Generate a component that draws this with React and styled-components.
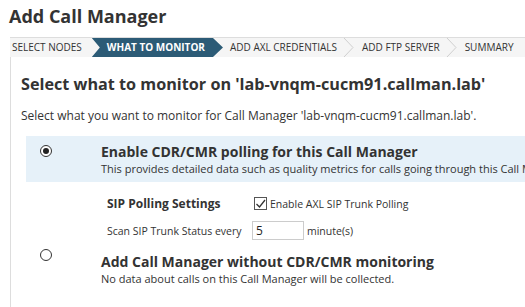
import styled, { createGlobalStyle } from 'styled-components';

const GlobalStyle = createGlobalStyle`
  body {
    margin: 0;
    font-family: "Open Sans", "Liberation Sans", sans-serif;
    color: #333;
    background: #fff;
  }
`;

const steps = [
  { label: 'SELECT NODES' },
  { label: 'WHAT TO MONITOR', active: true },
  { label: 'ADD AXL CREDENTIALS' },
  { label: 'ADD FTP SERVER' },
  { label: 'SUMMARY' },
];

const Chevron = () => (
  <svg width="12" height="19" viewBox="0 0 12 19">
    <polyline points="1,0 10,9.5 1,19" fill="none" stroke="#cfcfcf" strokeWidth="1" />
  </svg>
);

const App = () => (
  <Page>
    <GlobalStyle />
    <Title>Add Call Manager</Title>
    <Stepper>
      {steps.map((s, i) => {
        const nextActive = steps[i + 1] && steps[i + 1].active;
        return (
          <StepWrap key={s.label}>
            <Step $active={s.active} $first={i === 0}>
              {s.label}
            </Step>
            {!s.active && !nextActive && i < steps.length - 1 && <Chevron />}
          </StepWrap>
        );
      })}
    </Stepper>
    <Panel>
      <Heading>Select what to monitor on 'lab-vnqm-cucm91.callman.lab'</Heading>
      <Intro>Select what you want to monitor for Call Manager 'lab-vnqm-cucm91.callman.lab'.</Intro>

      <Option $selected>
        <Radio $checked />
        <OptionBody $offset={1}>
          <OptionTitle>Enable CDR/CMR polling for this Call Manager</OptionTitle>
          <OptionText>
            This provides detailed data such as quality metrics for calls going through this Call Manager.
          </OptionText>
        </OptionBody>
      </Option>

      <Settings>
        <SettingsRow>
          <SettingsLabel>SIP Polling Settings</SettingsLabel>
          <CheckLabel>
            <CheckBox>
              <svg width="11" height="10" viewBox="0 0 11 10">
                <polyline points="1.5,5 4.5,8 10,1" fill="none" stroke="#333" strokeWidth="1.3" />
              </svg>
            </CheckBox>
            Enable AXL SIP Trunk Polling
          </CheckLabel>
        </SettingsRow>
        <SettingsRow>
          <ScanLabel>Scan SIP Trunk Status every</ScanLabel>
          <NumberInput defaultValue="5" />
          <Unit>minute(s)</Unit>
        </SettingsRow>
      </Settings>

      <Option>
        <Radio />
        <OptionBody $offset={7}>
          <OptionTitle>Add Call Manager without CDR/CMR monitoring</OptionTitle>
          <OptionText $tall>No data about calls on this Call Manager will be collected.</OptionText>
        </OptionBody>
      </Option>
    </Panel>
  </Page>
);

const Page = styled.div`
  width: 525px;
  height: 307px;
  overflow: hidden;
`;

const Title = styled.h1`
  margin: 0;
  padding: 4px 0 0 9px;
  height: 34px;
  box-sizing: border-box;
  font-size: 18px;
  font-weight: 700;
  color: #333;
`;

const Stepper = styled.div`
  display: flex;
  align-items: center;
  margin-left: 10px;
  height: 19px;
  border-top: 1px solid #ddd;
  background: #f5f5f5;
  margin-top: 3px;
`;

const StepWrap = styled.div`
  display: flex;
  align-items: center;
  height: 100%;
`;

const Step = styled.div`
  height: 19px;
  line-height: 19px;
  font-size: 10px;
  white-space: nowrap;
  color: ${(p) => (p.$active ? '#fff' : '#333')};
  font-weight: ${(p) => (p.$active ? 700 : 400)};
  background: ${(p) => (p.$active ? '#2c5b76' : 'transparent')};
  padding: ${(p) => (p.$active ? '0 18px 0 15px' : p.$first ? '0 10px 0 2px' : '0 6px 0 7px')};
  clip-path: ${(p) =>
    p.$active
      ? 'polygon(0 0, calc(100% - 10px) 0, 100% 50%, calc(100% - 10px) 100%, 0 100%, 8px 50%)'
      : 'none'};
`;

const Panel = styled.div`
  margin-left: 10px;
  border-left: 1px solid #ddd;
  padding: 16px 0 0 10px;
  height: 260px;
`;

const Heading = styled.h2`
  margin: 0;
  font-size: 16.2px;
  font-weight: 700;
  color: #333;
  white-space: nowrap;
`;

const Intro = styled.p`
  margin: 12px 0 12px;
  font-size: 12px;
  white-space: nowrap;
`;

const Option = styled.div`
  display: flex;
  margin-left: 5px;
  padding: 6px 0 6px 14px;
  background: ${(p) => (p.$selected ? '#e6f1f9' : 'transparent')};
  white-space: nowrap;
`;

const Radio = styled.span`
  flex: none;
  width: 10px;
  height: 10px;
  margin-top: 3px;
  border: 1px solid #333;
  border-radius: 50%;
  background: #fff;
  position: relative;
  &::after {
    content: '';
    display: ${(p) => (p.$checked ? 'block' : 'none')};
    position: absolute;
    left: 2px;
    top: 2px;
    width: 6px;
    height: 6px;
    border-radius: 50%;
    background: #222;
  }
`;

const OptionBody = styled.div`
  margin-left: 49px;
  padding-top: ${(p) => p.$offset}px;
`;

const OptionTitle = styled.div`
  font-size: 14px;
  font-weight: 700;
  line-height: 18px;
`;

const OptionText = styled.div`
  font-size: 11px;
  line-height: ${(p) => (p.$tall ? 16 : 15)}px;
`;

const Settings = styled.div`
  padding: 13px 0 0 86px;
  display: flex;
  flex-direction: column;
  gap: 9px;
`;

const SettingsRow = styled.div`
  display: flex;
  align-items: center;
  white-space: nowrap;
`;

const SettingsLabel = styled.span`
  font-size: 12px;
  font-weight: 700;
  width: 147px;
`;

const CheckLabel = styled.label`
  display: flex;
  align-items: center;
  font-size: 10.5px;
`;

const CheckBox = styled.span`
  width: 11px;
  height: 11px;
  border: 1px solid #555;
  margin-right: 3px;
  display: flex;
  align-items: center;
  justify-content: center;
  background: #fff;
`;

const ScanLabel = styled.span`
  font-size: 10.5px;
  width: 145px;
`;

const NumberInput = styled.input`
  width: 44px;
  height: 17px;
  border: 1px solid #ccc;
  padding: 0 3px;
  font-family: "Open Sans", "Liberation Sans", sans-serif;
  font-size: 12px;
  color: #222;
  outline: none;
`;

const Unit = styled.span`
  font-size: 10.5px;
  margin-left: 3px;
`;

export default App;
